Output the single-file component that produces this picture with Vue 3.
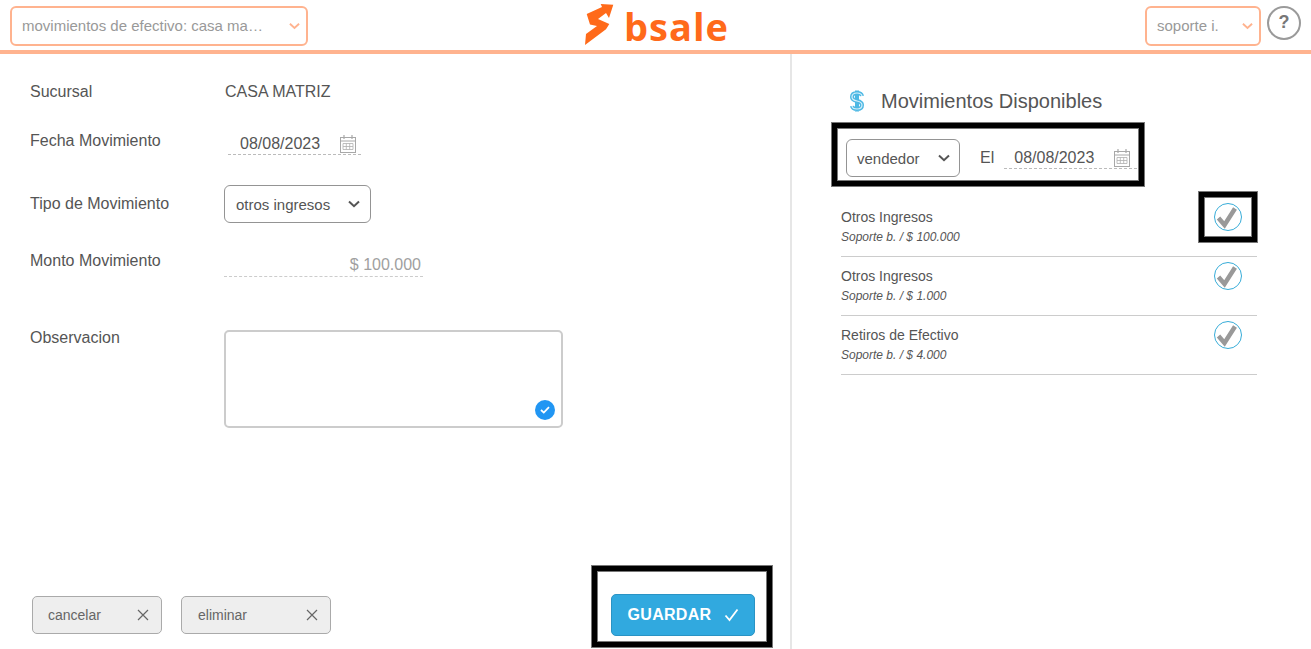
<script setup>
const movimientos = [
  { tipo: 'Otros Ingresos', detalle: 'Soporte b. / $ 100.000' },
  { tipo: 'Otros Ingresos', detalle: 'Soporte b. / $ 1.000' },
  { tipo: 'Retiros de Efectivo', detalle: 'Soporte b. / $ 4.000' },
]
</script>

<template>
  <div class="page">
    <header class="topbar">
      <div class="top-select wide">
        <span class="top-text">movimientos de efectivo: casa ma…</span>
        <svg class="chev" viewBox="0 0 12 8" width="11" height="8"><path d="M1 1.5 L6 6.2 L11 1.5" fill="none" stroke="#ffb38f" stroke-width="2" /></svg>
      </div>
      <div class="logo">
        <svg width="30" height="44" viewBox="0 0 30 44">
          <path d="M1.7 11 L17 4 L15.7 1 L28.3 1.7 L24 15 L21 10 L13 16 L24.3 21 L21 26.3 L0 42 L1 31 L12 23 L5 21.5 Z" fill="#ff6a1a" />
        </svg>
        <span class="logo-word">bsale</span>
      </div>
      <div class="top-right">
        <div class="top-select narrow">
          <span class="top-text">soporte i.</span>
          <svg class="chev" viewBox="0 0 12 8" width="11" height="8"><path d="M1 1.5 L6 6.2 L11 1.5" fill="none" stroke="#ffb38f" stroke-width="2" /></svg>
        </div>
        <div class="help">?</div>
      </div>
    </header>

    <main class="content">
      <section class="left">
        <div class="form">
          <div class="row r-suc"><label>Sucursal</label><span class="value">CASA MATRIZ</span></div>
          <div class="row r-fecha">
            <label>Fecha Movimiento</label>
            <div class="date">
              <span>08/08/2023</span>
              <svg class="cal" width="16" height="18" viewBox="0 0 16 18"><use href="#cal-icon" /></svg>
            </div>
          </div>
          <div class="row r-tipo">
            <label>Tipo de Movimiento</label>
            <div class="select tipo">
              <span>otros ingresos</span>
              <svg viewBox="0 0 12 8" width="12" height="8"><path d="M1 1.5 L6 6.2 L11 1.5" fill="none" stroke="#555" stroke-width="2" /></svg>
            </div>
          </div>
          <div class="row r-monto"><label>Monto Movimiento</label><div class="amount">$ 100.000</div></div>
          <div class="row r-obs">
            <label>Observacion</label>
            <div class="textarea">
              <span class="ok">
                <svg width="10" height="8" viewBox="0 0 10 8"><path d="M1 4 L3.8 6.6 L9 1.2" fill="none" stroke="#fff" stroke-width="1.8" /></svg>
              </span>
            </div>
          </div>
        </div>
        <div class="actions">
          <button class="btn-soft cancel"><span>cancelar</span><svg width="12" height="12" viewBox="0 0 12 12"><path d="M1 1 L11 11 M11 1 L1 11" stroke="#666" stroke-width="1.2" /></svg></button>
          <button class="btn-soft remove"><span>eliminar</span><svg width="12" height="12" viewBox="0 0 12 12"><path d="M1 1 L11 11 M11 1 L1 11" stroke="#666" stroke-width="1.2" /></svg></button>
          <button class="btn-save">GUARDAR <svg width="15" height="14" viewBox="0 0 15 14"><path d="M1.5 7.5 L5.5 12 L13.5 1.5" fill="none" stroke="#fff" stroke-width="1.8" /></svg></button>
          <div class="mark mark-save"></div>
        </div>
      </section>

      <aside class="right">
        <h2 class="title">
          <svg class="dollar" width="16" height="24" viewBox="0 0 16 24">
            <path d="M8 1.5 V22.5 M13 7 Q12.5 4 8 4 Q3 4 3 8 Q3 11 8 12 Q13 13 13 16 Q13 20 8 20 Q3.5 20 3 17" fill="none" stroke="#4db8e4" stroke-width="4" />
            <path d="M13 7 Q12.5 4 8 4 Q3 4 3 8 Q3 11 8 12 Q13 13 13 16 Q13 20 8 20 Q3.5 20 3 17" fill="none" stroke="#d8f0fa" stroke-width="1.2" />
          </svg>
          <span>Movimientos Disponibles</span>
        </h2>
        <div class="filter">
          <div class="select vendedor">
            <span>vendedor</span>
            <svg viewBox="0 0 12 8" width="12" height="8"><path d="M1 1.5 L6 6.2 L11 1.5" fill="none" stroke="#555" stroke-width="2" /></svg>
          </div>
          <span class="el">El</span>
          <div class="date small">
            <span>08/08/2023</span>
            <svg class="cal" width="16" height="18" viewBox="0 0 16 18"><use href="#cal-icon" /></svg>
          </div>
          <div class="mark mark-filter"></div>
        </div>
        <ul class="list">
          <li v-for="(m, i) in movimientos" :key="i" class="item">
            <div>
              <div class="item-type">{{ m.tipo }}</div>
              <div class="item-detail">{{ m.detalle }}</div>
            </div>
            <div class="check-wrap">
              <svg width="28" height="28" viewBox="0 0 28 28">
                <circle cx="14" cy="14" r="13.5" fill="#fff" stroke="#36acd8" stroke-width="1" />
                <path class="tick" d="M4.5 15 L10.5 22 L21 5.5" fill="none" stroke="#999" stroke-width="4.5" />
              </svg>
              <div v-if="i === 0" class="mark mark-check"></div>
            </div>
          </li>
        </ul>
      </aside>
    </main>

    <svg width="0" height="0" class="defs">
      <symbol id="cal-icon" viewBox="0 0 16 18">
        <rect x="0.5" y="2.5" width="15" height="15" fill="#fff" stroke="#a8a8a8" />
        <path d="M4 0 V4 M12 0 V4" stroke="#a8a8a8" stroke-width="1.2" />
        <path d="M0.5 6 H15.5" stroke="#a8a8a8" />
        <path d="M3 8.5 H13 V14.5 H3 Z M3 11.5 H13 M6.3 8.5 V14.5 M9.7 8.5 V14.5" fill="none" stroke="#b0b0b0" stroke-width="0.8" />
      </symbol>
    </svg>
  </div>
</template>

<style scoped>
.page {
  height: 649px;
  overflow: hidden;
  background: #fff;
  font-family: "Liberation Sans", Arial, sans-serif;
  color: #555;
}
.defs { position: absolute; }
.topbar {
  height: 54px;
  box-sizing: border-box;
  border-bottom: 4px solid #ffb38f;
  position: relative;
  display: flex;
  align-items: flex-start;
  justify-content: space-between;
  padding: 6px 10px 0 10px;
}
.top-select {
  height: 40px;
  box-sizing: border-box;
  border: 2px solid #ffb38f;
  border-radius: 6px;
  display: flex;
  align-items: center;
  justify-content: space-between;
  font-size: 15px;
  color: #999;
  padding-bottom: 2px;
}
.chev { margin-top: 2px; }
.top-text { white-space: nowrap; }
.wide { width: 298px; padding-left: 10px; padding-right: 6px; }
.narrow { width: 116px; padding-left: 10px; padding-right: 6px; }
.logo {
  position: absolute;
  left: 585px;
  top: 3px;
  display: flex;
  align-items: flex-start;
  gap: 9px;
}
.logo-word {
  font-family: "Open Sans", sans-serif;
  font-size: 38px;
  font-weight: 700;
  line-height: 46px;
  color: #ff6a1a;
  letter-spacing: 1px;
}
.top-right { display: flex; align-items: flex-start; gap: 6px; }
.help {
  width: 34px;
  height: 34px;
  box-sizing: border-box;
  border: 2px solid #9a9a9a;
  border-radius: 50%;
  text-align: center;
  font-size: 18px;
  font-weight: 700;
  line-height: 29px;
  color: #777;
}
.content { display: flex; height: 595px; }
.left {
  width: 790px;
  height: 595px;
  box-sizing: border-box;
  padding: 0 0 0 30px;
  display: flex;
  flex-direction: column;
  justify-content: space-between;
}
.form { display: flex; flex-direction: column; }
.row { display: flex; align-items: flex-start; font-size: 16px; }
.row label { width: 194px; flex: none; line-height: 18px; color: #555; }
.value { line-height: 18px; margin-left: 1px; }
.r-suc { margin-top: 29px; }
.r-fecha { margin-top: 31px; }
.r-tipo { margin-top: 30px; }
.r-monto { margin-top: 29px; }
.r-obs { margin-top: 52px; }
.r-tipo label { margin-top: 10px; }
.date {
  width: 133px;
  margin: 1px 0 0 4px;
  height: 22px;
  box-sizing: border-box;
  border-bottom: 1px dashed #bbb;
  display: flex;
  align-items: center;
  justify-content: space-between;
  padding: 0 5px 0 12px;
  font-size: 16px;
}
.date.small { width: 133px; margin: 0; padding: 0 7px 0 10px; }
.select {
  height: 38px;
  box-sizing: border-box;
  border: 1px solid #949494;
  border-radius: 6px;
  display: flex;
  align-items: center;
  justify-content: space-between;
  font-size: 15px;
  background: #fff;
}
.tipo { width: 147px; padding: 0 10px 0 11px; }
.amount {
  width: 199px;
  height: 22px;
  margin-top: 3px;
  box-sizing: border-box;
  border-bottom: 1px dashed #ccc;
  text-align: right;
  padding-right: 2px;
  font-size: 16px;
  line-height: 20px;
  color: #a0a0a0;
}
.textarea {
  width: 339px;
  height: 98px;
  box-sizing: border-box;
  border: 2px solid #ccc;
  border-radius: 5px;
  margin-top: 1px;
  position: relative;
}
.ok {
  position: absolute;
  right: 6px;
  bottom: 6px;
  width: 20px;
  height: 20px;
  border-radius: 50%;
  background: #2196f3;
  display: flex;
  align-items: center;
  justify-content: center;
}
.actions {
  display: flex;
  align-items: center;
  position: relative;
  margin: 0 0 13px 2px;
  height: 42px;
}
.btn-soft {
  height: 38px;
  box-sizing: border-box;
  background: #eee;
  border: 1px solid #aaa;
  border-radius: 5px;
  display: flex;
  align-items: center;
  justify-content: space-between;
  font: 14px "Liberation Sans", Arial, sans-serif;
  color: #666;
  padding: 0 12px 0 15px;
}
.cancel { width: 130px; }
.remove { width: 150px; margin-left: 19px; padding-left: 16px; }
.btn-save {
  width: 144px;
  height: 42px;
  margin-left: 280px;
  box-sizing: border-box;
  background: #31a9df;
  border: 1px solid #2a93c4;
  border-radius: 5px;
  color: #fff;
  font: 700 16px "Liberation Sans", Arial, sans-serif;
  letter-spacing: 0.3px;
  display: flex;
  align-items: center;
  justify-content: center;
  gap: 13px;
  padding-left: 7px;
}
.mark {
  position: absolute;
  box-sizing: border-box;
  border: 5px solid #000;
  box-shadow: 0 0 0 1px #777, inset 0 0 0 1px #777;
  pointer-events: none;
}
.mark-save { left: 560px; top: -28px; width: 180px; height: 81px; }
.right {
  flex: 1;
  border-left: 2px solid #e6e6e6;
  position: relative;
  padding: 0 54px 0 49px;
}
.title {
  margin: 35px 0 0 8px;
  display: flex;
  align-items: center;
  gap: 16px;
  font-size: 20px;
  font-weight: 400;
  line-height: 24px;
  color: #555;
}
.filter {
  position: relative;
  display: flex;
  align-items: center;
  margin: 26px 0 0 5px;
  height: 38px;
}
.vendedor { width: 114px; padding: 0 9px 0 10px; }
.el { margin: 0 10px 0 20px; font-size: 16px; }
.mark-filter { left: -14px; top: -16px; width: 312px; height: 63px; }
.list { list-style: none; margin: 21px 0 0; padding: 0; }
.item {
  height: 59px;
  box-sizing: border-box;
  border-bottom: 1px solid #ccc;
  display: flex;
  justify-content: space-between;
  align-items: flex-start;
  padding: 11px 15px 0 0;
}
.item-type { font-size: 14px; line-height: 16px; color: #555; }
.item-detail { font-size: 12px; font-style: italic; line-height: 14px; margin-top: 5px; color: #555; }
.check-wrap { position: relative; width: 28px; height: 28px; margin-top: -6px; }
.tick { filter: blur(0.4px); }
.mark-check { left: -15px; top: -11px; width: 58px; height: 50px; }
</style>
